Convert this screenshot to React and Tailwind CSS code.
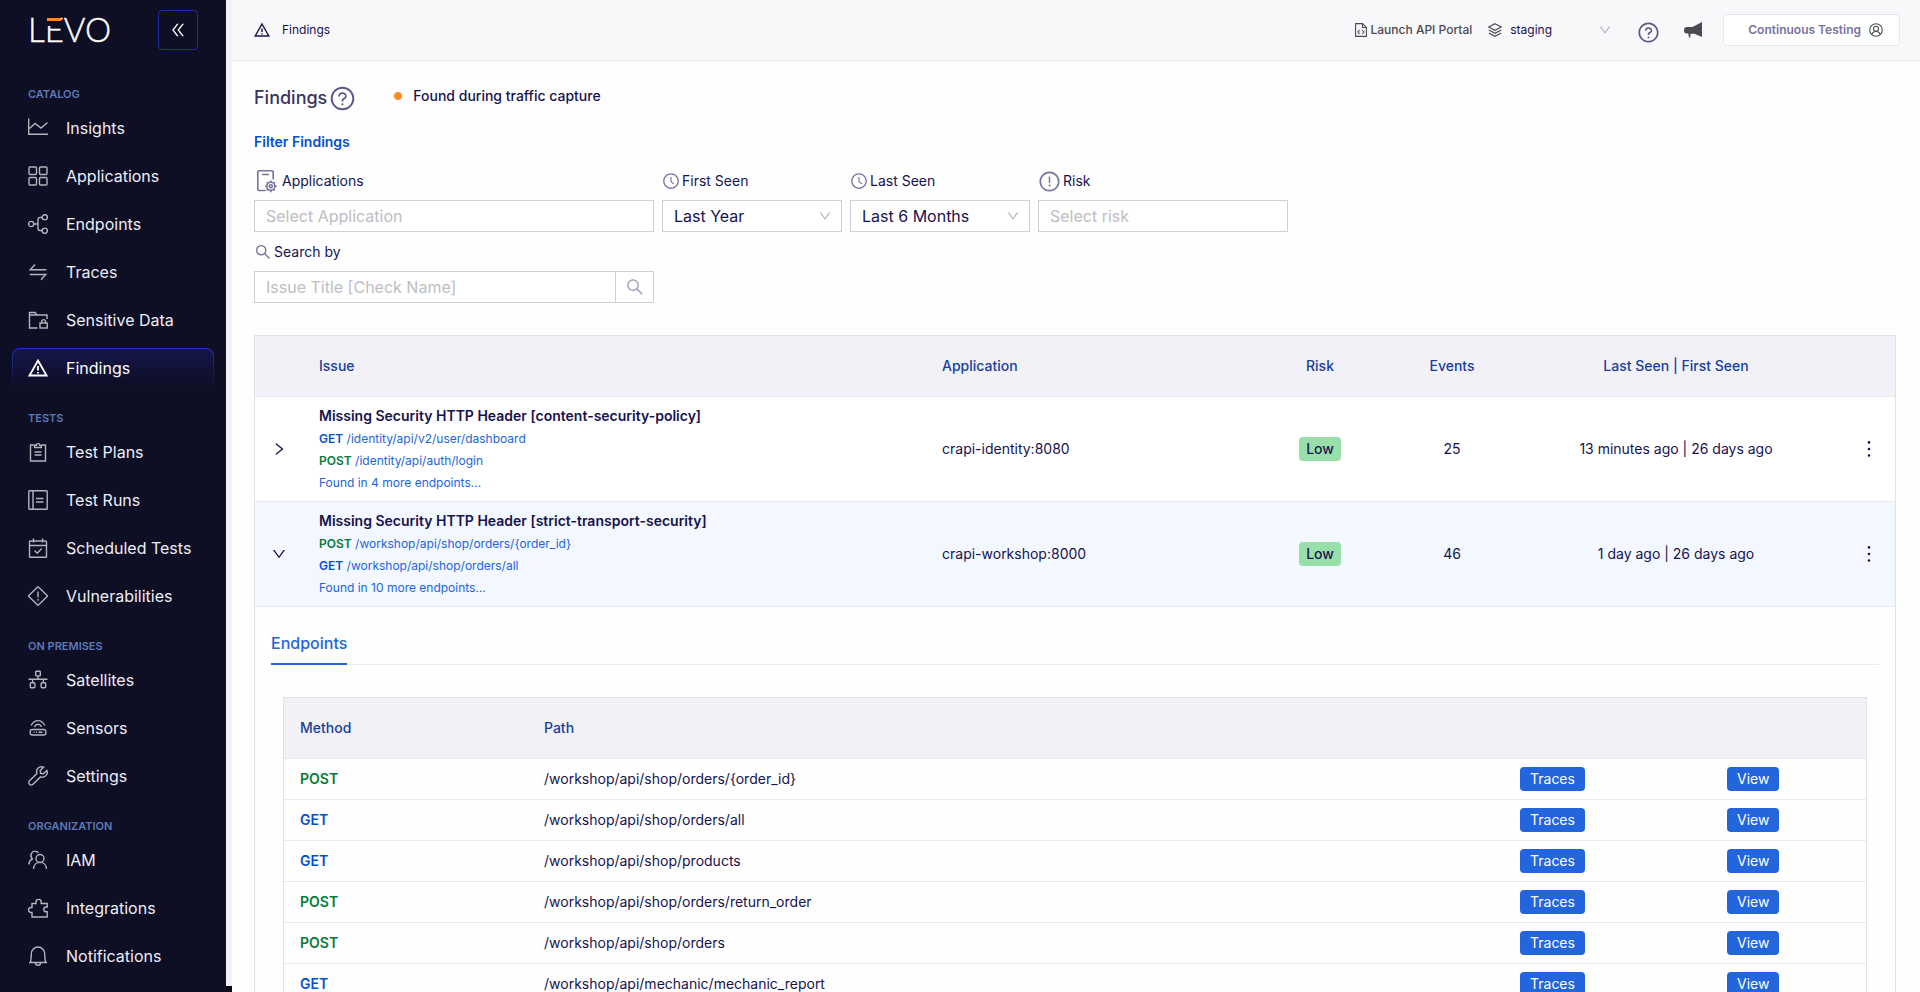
import React, { useState } from 'react';
import {
  AiOutlineClockCircle,
  AiOutlineDoubleLeft,
  AiOutlineDown,
  AiOutlineExclamationCircle,
  AiOutlineMore,
  AiOutlineQuestionCircle,
  AiOutlineRight,
  AiOutlineSearch
} from 'react-icons/ai';

const icons = {
  insights: <path d="M.7.5v15.8H20M1.5 10.5 7 5.5l6 4.5 6.500-5.500" />,
  applications: (
    <>
      <rect x="1" y="1" width="7.500" height="7.500" rx="1" />
      <rect x="11.500" y="1" width="7.500" height="7.500" rx="1" />
      <rect x="1" y="11.500" width="7.500" height="7.500" rx="1" />
      <rect x="11.500" y="11.500" width="7.500" height="7.500" rx="1" />
    </>
  ),
  endpoints: (
    <>
      <circle cx="3.200" cy="10" r="2.600" />
      <circle cx="16.800" cy="3.300" r="2.600" />
      <circle cx="16.800" cy="16.700" r="2.600" />
      <path d="M5.800 10H10M14.200 3.500H12a2 2 0 0 0-2 2v9a2 2 0 0 0 2 2h2.200" />
    </>
  ),
  traces: <path d="M18.300 7.700h-16l4.700-5.200M1.700 12.500h16L13 17.700" />,
  sensitive: (
    <>
      <path d="M9.500 18H1.500V2.500H7L9 5h10v4M1.500 5H9" />
      <rect x="12" y="13" width="7.200" height="5" />
      <path d="M13.700 13v-1.500a1.900 1.900 0 0 1 3.800 0V13" />
    </>
  ),
  findings: <path d="M10 2.500 18.500 17.500H1.500ZM10 8v4.500M10 14v1.500" strokeWidth="1.800" />,
  plans: (
    <>
      <path d="M6 3H2.500v16h15V3H14M6.700 5.500h6.600V3.300h-1.600a1.700 1.700 0 0 0-3.400 0H6.700Z" />
      <path d="M6.500 10h7M6.500 13h7" />
    </>
  ),
  runs: (
    <>
      <rect x=".8" y=".8" width="18.400" height="18.400" rx=".8" />
      <path d="M5 1v18M8 8.500h7.500M8 12h7.500" />
    </>
  ),
  scheduled: (
    <>
      <rect x="1.500" y="3" width="17" height="16.200" rx=".8" />
      <path d="M1.500 7.500h17M5.500.5v4M14.500.5v4M6.500 12.500l2.700 2.700 4.500-4.700" />
    </>
  ),
  vulnerabilities: (
    <>
      <path d="M9.300 1.300.9 9.400a.8.800 0 0 0 0 1.200l8.400 8.100c.4.400 1 .4 1.400 0l8.400-8.100a.8.800 0 0 0 0-1.200L10.700 1.300a1 1 0 0 0-1.400 0Z" />
      <path d="M10 5.500v6M10 13v1.700" />
    </>
  ),
  satellites: (
    <>
      <rect x="7.700" y="1.300" width="4.600" height="4.600" rx=".6" />
      <rect x="2.300" y="12.800" width="4.600" height="5" rx="1" />
      <rect x="13.100" y="12.800" width="4.600" height="5" rx="1" />
      <path d="M10 6v3.200M.5 9.200h19M4.600 9.200v3.500M15.400 9.200v3.500" />
    </>
  ),
  sensors: (
    <>
      <rect x="2.200" y="11.500" width="15.600" height="5.500" rx="2" />
      <path d="M5.500 14.200h1M8 14.200h1M10.500 14.200h4M3 7.500c3.800-6.500 10.200-6.500 14 0M6.300 8.800c2-3.400 5.400-3.400 7.400 0" />
    </>
  ),
  settings: (
    <path d="M18.800 4.400 15.400 7.800 12.600 7.300 12.200 4.600 15.600 1.200C12.800 0 9.900 1.200 8.800 4 8.400 5.200 8.500 6.400 8.900 7.500L1.500 14.700a2.400 2.400 0 0 0 0 3.500 2.400 2.400 0 0 0 3.500 0l7.500-7.300c1.100.4 2.300.4 3.400 0 2.900-1.100 4.100-3.900 2.900-6.500Z" />
  ),
  iam: (
    <>
      <circle cx="12" cy="8.500" r="4" />
      <path d="M5.500 19c.3-8.800 12.700-8.800 13 0M.8 14.500c.2-2.600 1.500-4.600 3.500-5.500C1 5.500 4 .8 7.500 1.200c1.200.1 2.200.6 3 1.500" />
    </>
  ),
  integrations: (
    <path d="M4 5.500h4V4a2.600 2.600 0 0 1 5.200 0v1.500h6V9h-1a2.400 2.400 0 0 0 0 4.800h1V19H4v-4.500H3a2.500 2.500 0 0 1 0-5h1Z" />
  ),
  notifications: (
    <path d="M1 16.500h18M2.500 16.500C3 14 3.300 11 3.300 8a6.700 7 0 0 1 13.400 0c0 3 .3 6 .8 8.500M7.500 17a2.500 2.200 0 0 0 5 0" />
  )
};

const navGroups = [
  {
    title: 'CATALOG',
    items: [
      ['insights', 'Insights'],
      ['applications', 'Applications'],
      ['endpoints', 'Endpoints'],
      ['traces', 'Traces'],
      ['sensitive', 'Sensitive Data'],
      ['findings', 'Findings']
    ]
  },
  {
    title: 'TESTS',
    items: [
      ['plans', 'Test Plans'],
      ['runs', 'Test Runs'],
      ['scheduled', 'Scheduled Tests'],
      ['vulnerabilities', 'Vulnerabilities']
    ]
  },
  {
    title: 'ON PREMISES',
    items: [
      ['satellites', 'Satellites'],
      ['sensors', 'Sensors'],
      ['settings', 'Settings']
    ]
  },
  {
    title: 'ORGANIZATION',
    items: [
      ['iam', 'IAM'],
      ['integrations', 'Integrations'],
      ['notifications', 'Notifications']
    ]
  }
];

const findings = [
  {
    id: 'csp',
    title: 'Missing Security HTTP Header [content-security-policy]',
    endpoints: [
      { method: 'GET', path: '/identity/api/v2/user/dashboard' },
      { method: 'POST', path: '/identity/api/auth/login' }
    ],
    more: 4,
    application: 'crapi-identity:8080',
    risk: 'Low',
    events: 25,
    seen: '13 minutes ago | 26 days ago'
  },
  {
    id: 'sts',
    title: 'Missing Security HTTP Header [strict-transport-security]',
    endpoints: [
      { method: 'POST', path: '/workshop/api/shop/orders/{order_id}' },
      { method: 'GET', path: '/workshop/api/shop/orders/all' }
    ],
    more: 10,
    application: 'crapi-workshop:8000',
    risk: 'Low',
    events: 46,
    seen: '1 day ago | 26 days ago'
  }
];

const endpointRows = [
  { method: 'POST', path: '/workshop/api/shop/orders/{order_id}' },
  { method: 'GET', path: '/workshop/api/shop/orders/all' },
  { method: 'GET', path: '/workshop/api/shop/products' },
  { method: 'POST', path: '/workshop/api/shop/orders/return_order' },
  { method: 'POST', path: '/workshop/api/shop/orders' },
  { method: 'GET', path: '/workshop/api/mechanic/mechanic_report' }
];

const methodColor = {
  GET: 'text-[#0550cc]',
  POST: 'text-[#087a3c]'
};

function NavIcon({ name, className }) {
  return (
    <svg viewBox="0 0 20 20" fill="none" stroke="currentColor" strokeWidth="1.4" className={className}>
      {icons[name]}
    </svg>
  );
}

function Logo() {
  return (
    <svg viewBox="0 0 84 40" className="w-[84px] h-10 overflow-visible" role="img" aria-label="Levo">
      <text x="0" y="32" fill="#ffffff" stroke="#ffffff" strokeWidth=".4" fontFamily="Lato, sans-serif" fontWeight="300" fontSize="33">LEVO</text>
      <rect x="16" y="7" width="17" height="9" fill="#0e0e25" />
      <rect x="19" y="8" width="14" height="3" fill="#f58a1f" />
    </svg>
  );
}

function NavItem({ icon, label, active }) {
  if (active) {
    return (
      <a href="#" aria-current="page" className="block h-10 p-px rounded-lg bg-gradient-to-b from-[#2632b4] to-[#0e0e25] text-white">
        <span className="flex items-center h-full gap-[18px] px-[15px] rounded-[7px] bg-gradient-to-b from-[#15154c] to-[#0e0e25]">
          <NavIcon name={icon} className="w-5 h-5" />
          <span>{label}</span>
        </span>
      </a>
    );
  }
  return (
    <a href="#" className="flex items-center h-10 gap-[18px] px-4 text-[#ededf5]">
      <NavIcon name={icon} className="w-5 h-5 text-[#b4b4bc]" />
      <span>{label}</span>
    </a>
  );
}

function Sidebar() {
  return (
    <aside className="w-[226px] shrink-0 bg-[#0e0e25] overflow-hidden">
      <div className="flex items-start justify-between h-16 px-7 pt-2.5">
        <Logo />
        <button aria-label="Collapse menu" className="flex items-center justify-center w-10 h-10 border border-[#222c9c] rounded text-white">
          <AiOutlineDoubleLeft className="w-[18px] h-[18px]" />
        </button>
      </div>
      <nav className="px-3 text-base">
        {navGroups.map((group) => (
          <div key={group.title}>
            <h2 className="flex items-center h-11 pt-4 pl-4 text-[11px] font-semibold text-[#5c7ab5]">{group.title}</h2>
            <div className="flex flex-col gap-2">
              {group.items.map(([icon, label]) => (
                <NavItem key={label} icon={icon} label={label} active={label === 'Findings'} />
              ))}
            </div>
          </div>
        ))}
      </nav>
    </aside>
  );
}

function TopBar() {
  return (
    <header className="flex items-center justify-between h-[61px] shrink-0 pl-[22px] pr-5 bg-[#f8f7fa] border-b border-[#e6e6ec] text-xs">
      <div className="flex items-center gap-3">
        <NavIcon name="findings" className="w-4 h-4" />
        <span>Findings</span>
      </div>
      <div className="flex items-center">
        <a href="#" className="flex items-center gap-1 font-medium text-[#4a4a52]">
          <svg viewBox="0 0 12 14" fill="none" stroke="currentColor" strokeWidth="1.1" className="w-3 h-3.5">
            <path d="M.6.6h7l3.800 3.800v9H.6ZM7.500.8v3.700h3.700M4.700 7 3 9l1.700 2M7.300 7 9 9l-1.700 2" />
          </svg>
          <span>Launch API Portal</span>
        </a>
        <svg viewBox="0 0 14 14" fill="none" stroke="#4a4a52" strokeWidth="1.1" className="w-3.5 h-3.5 ml-4">
          <path d="M7 .7 13.200 4 7 7.300.8 4ZM.8 7 7 10.300 13.200 7M.8 10 7 13.300 13.200 10" />
        </svg>
        <div className="relative flex items-center w-[102px] ml-2">
          <select aria-label="Environment" className="w-full appearance-none bg-transparent">
            <option>staging</option>
          </select>
          <AiOutlineDown className="absolute right-0 w-3.5 h-3.5 text-[#b0b0b8] pointer-events-none" />
        </div>
        <button aria-label="Help" className="ml-[25px] pt-1 text-[#5c5585]">
          <AiOutlineQuestionCircle className="w-[23px] h-[23px]" />
        </button>
        <button aria-label="Announcements" className="ml-6 text-[#4a4a52]">
          <svg viewBox="0 0 18 16" fill="currentColor" className="w-[18px] h-4">
            <path d="M18 0v15L10.500 11.700H6.500L6.200 15.500H5L4.300 11.500H3A3 3 0 0 1 0 8.500V8a3 3 0 0 1 3-3H8.500Z" />
          </svg>
        </button>
        <button className="flex items-center gap-2 h-8 ml-[21px] pl-6 pr-4 bg-white border border-[#e6e6ee] rounded font-semibold text-[#77739f]">
          <span>Continuous Testing</span>
          <svg viewBox="0 0 14 14" fill="none" stroke="#4a4a52" strokeWidth="1.1" className="w-3.5 h-3.5">
            <circle cx="7" cy="7" r="6.300" />
            <circle cx="7" cy="5.700" r="2.500" />
            <path d="M3 11.500c.5-4 7.500-4 8 0" />
          </svg>
        </button>
      </div>
    </header>
  );
}

function FilterSelect({ id, label, value }) {
  return (
    <div className="w-[180px]">
      <label htmlFor={id} className="flex items-center gap-0.5 h-[38px]">
        <AiOutlineClockCircle className="w-[18px] h-[18px] text-[#77739f]" />
        {label}
      </label>
      <div className="relative flex items-center">
        <select id={id} className="w-full h-8 pl-[11px] pr-8 appearance-none bg-white border border-[#d0d0d4] text-base">
          <option>{value}</option>
        </select>
        <AiOutlineDown className="absolute right-2.5 w-3.5 h-3.5 text-[#b0b0b8] pointer-events-none" />
      </div>
    </div>
  );
}

function Filters() {
  return (
    <section>
      <div className="flex flex-wrap gap-x-2">
        <div className="w-[400px]">
          <label htmlFor="applications" className="flex items-center gap-1 h-[38px]">
            <svg viewBox="0 0 24 24" fill="none" stroke="#77739f" strokeWidth="1.6" className="w-6 h-6">
              <path d="M11.500 21.500H5A1.200 1.200 0 0 1 3.800 20.300V3A1.200 1.200 0 0 1 5 1.800h13A1.200 1.200 0 0 1 19.200 3v7.500M8 5.500h7" />
              <circle cx="16.800" cy="17.300" r="4" />
              <circle cx="16.800" cy="17.300" r="1.500" />
              <path d="M16.800 11.500v2M16.800 21v2.200M11 17.300h2M20.800 17.300h2M12.700 13.200l1.300 1.300M19.600 20.100l1.300 1.300M12.700 21.400l1.300-1.300M19.600 14.500l1.300-1.300" />
            </svg>
            Applications
          </label>
          <input id="applications" placeholder="Select Application" className="block w-full h-8 px-[11px] bg-white border border-[#d0d0d4] text-base placeholder:text-[#bdbdc2]" />
        </div>
        <FilterSelect id="first-seen" label="First Seen" value="Last Year" />
        <FilterSelect id="last-seen" label="Last Seen" value="Last 6 Months" />
        <div className="w-[250px]">
          <label htmlFor="risk" className="flex items-center gap-0.5 h-[38px]">
            <AiOutlineExclamationCircle className="w-[23px] h-[23px] text-[#77739f]" />
            Risk
          </label>
          <input id="risk" placeholder="Select risk" className="block w-full h-8 px-[11px] bg-white border border-[#d0d0d4] text-base placeholder:text-[#bdbdc2]" />
        </div>
      </div>
      <div className="w-[400px]">
        <label htmlFor="search" className="flex items-center gap-0.5 h-[39px]">
          <AiOutlineSearch className="w-[18px] h-[18px] text-[#77739f]" />
          Search by
        </label>
        <div className="flex h-8 border border-[#d0d0d4] bg-white">
          <input id="search" placeholder="Issue Title [Check Name]" className="flex-1 px-[11px] text-base placeholder:text-[#bdbdc2]" />
          <button aria-label="Search" className="flex items-center justify-center w-[38px] border-l border-[#d0d0d4] text-[#a5a3bd]">
            <AiOutlineSearch className="w-5 h-5" />
          </button>
        </div>
      </div>
    </section>
  );
}

function EndpointsPanel() {
  return (
    <div className="px-4 pt-4 pb-6">
      <div role="tablist" className="flex h-[42px] border-b border-[#ececf0] text-base font-medium">
        <button role="tab" aria-selected="true" className="h-[42px] border-b-2 border-[#2265dc] text-[#2265dc]">Endpoints</button>
      </div>
      <div className="mx-3 mt-8 border border-[#e2e1ea]">
        <table className="w-full table-fixed text-left">
          <colgroup>
            <col className="w-[244px]" />
            <col />
            <col className="w-[207px]" />
            <col className="w-[155px]" />
          </colgroup>
          <thead>
            <tr className="h-[61px] bg-[#f2f1f8] text-[#173f9c] border-b border-[#eaeaf0]">
              <th className="px-4 font-medium">Method</th>
              <th className="px-4 font-medium">Path</th>
              <th></th>
              <th></th>
            </tr>
          </thead>
          <tbody>
            {endpointRows.map((row) => (
              <tr key={row.method + row.path} className="h-[41px] border-b border-[#eaeaf0]">
                <td className={`px-4 font-semibold ${methodColor[row.method]}`}>{row.method}</td>
                <td className="px-4">{row.path}</td>
                <td className="px-4">
                  <button className="block h-6 px-2.5 rounded bg-[#2265dc] text-white">Traces</button>
                </td>
                <td className="px-4">
                  <button className="block h-6 px-2.5 rounded bg-[#2265dc] text-white">View</button>
                </td>
              </tr>
            ))}
          </tbody>
        </table>
      </div>
    </div>
  );
}

function FindingsTable() {
  const [expanded, setExpanded] = useState('sts');

  return (
    <div className="mt-8 border border-[#e2e1ea]">
      <table className="w-full table-fixed text-left">
        <colgroup>
          <col className="w-12" />
          <col />
          <col className="w-[320px]" />
          <col className="w-[148px]" />
          <col className="w-[116px]" />
          <col className="w-[332px]" />
          <col className="w-[53px]" />
        </colgroup>
        <thead>
          <tr className="h-[60px] bg-[#f2f1f8] text-[#173f9c] border-b border-[#eaeaf0]">
            <th></th>
            <th className="px-4 font-medium">Issue</th>
            <th className="px-4 font-medium">Application</th>
            <th className="px-4 font-medium text-center">Risk</th>
            <th className="px-4 font-medium text-center">Events</th>
            <th className="px-4 font-medium text-center">Last Seen | First Seen</th>
            <th></th>
          </tr>
        </thead>
        <tbody>
          {findings.map((finding) => {
            const open = expanded === finding.id;
            return (
              <React.Fragment key={finding.id}>
                <tr className={`h-[105px] border-b border-[#e8e9f0] ${open ? 'bg-[#f3f7ff]' : 'bg-white'}`}>
                  <td>
                    <button
                      aria-label="Toggle details"
                      aria-expanded={open}
                      onClick={() => setExpanded(open ? null : finding.id)}
                      className="flex items-center justify-center w-full h-6"
                    >
                      {open ? <AiOutlineDown className="w-4 h-4" /> : <AiOutlineRight className="w-4 h-4" />}
                    </button>
                  </td>
                  <td className="px-4">
                    <div className="font-semibold leading-6">{finding.title}</div>
                    {finding.endpoints.map((endpoint) => (
                      <div key={endpoint.path} className="text-xs leading-[22px] text-[#2265dc]">
                        <span className={`font-semibold ${methodColor[endpoint.method]}`}>{endpoint.method}</span>{' '}
                        {endpoint.path}
                      </div>
                    ))}
                    <div className="text-xs leading-[22px] text-[#2265dc]">Found in {finding.more} more endpoints...</div>
                  </td>
                  <td className="px-4">{finding.application}</td>
                  <td className="px-4 text-center">
                    <span className="inline-flex items-center h-6 px-[7px] rounded bg-[#98dfa9] font-medium">{finding.risk}</span>
                  </td>
                  <td className="px-4 text-center">{finding.events}</td>
                  <td className="px-4 text-center">{finding.seen}</td>
                  <td>
                    <button aria-label="More actions" className="flex items-center justify-center w-full h-6">
                      <AiOutlineMore className="w-6 h-6" />
                    </button>
                  </td>
                </tr>
                {open && (
                  <tr>
                    <td colSpan={7}>
                      <EndpointsPanel />
                    </td>
                  </tr>
                )}
              </React.Fragment>
            );
          })}
        </tbody>
      </table>
    </div>
  );
}

export default function App() {
  return (
    <div className="flex h-screen overflow-hidden bg-[#fefefe] font-[Inter,sans-serif] text-sm text-[#17134d]">
      <Sidebar />
      <div className="w-1.5 shrink-0 bg-[#eff1f5] border-b-[6px] border-[#0b0b18]" />
      <div className="flex flex-col flex-1 min-w-0">
        <TopBar />
        <main className="flex-1 min-h-0 overflow-y-auto [scrollbar-width:none] pl-[22px] pr-6">
          {/* Page title */}
          <div className="flex items-center h-[70px]">
            <div className="flex items-center gap-0.5 pt-1">
              <h1 className="text-lg font-medium text-[#38345f]">Findings</h1>
              <AiOutlineQuestionCircle className="w-[27px] h-[27px] text-[#5c5585]" />
            </div>
            <span className="w-2 h-2 ml-[38px] rounded-full bg-[#fb8f24]" />
            <span className="ml-[11px] font-medium">Found during traffic capture</span>
          </div>
          <button className="block h-[22px] mb-[9px] font-semibold text-[#0550cc]">Filter Findings</button>
          <Filters />
          <FindingsTable />
        </main>
      </div>
    </div>
  );
}
